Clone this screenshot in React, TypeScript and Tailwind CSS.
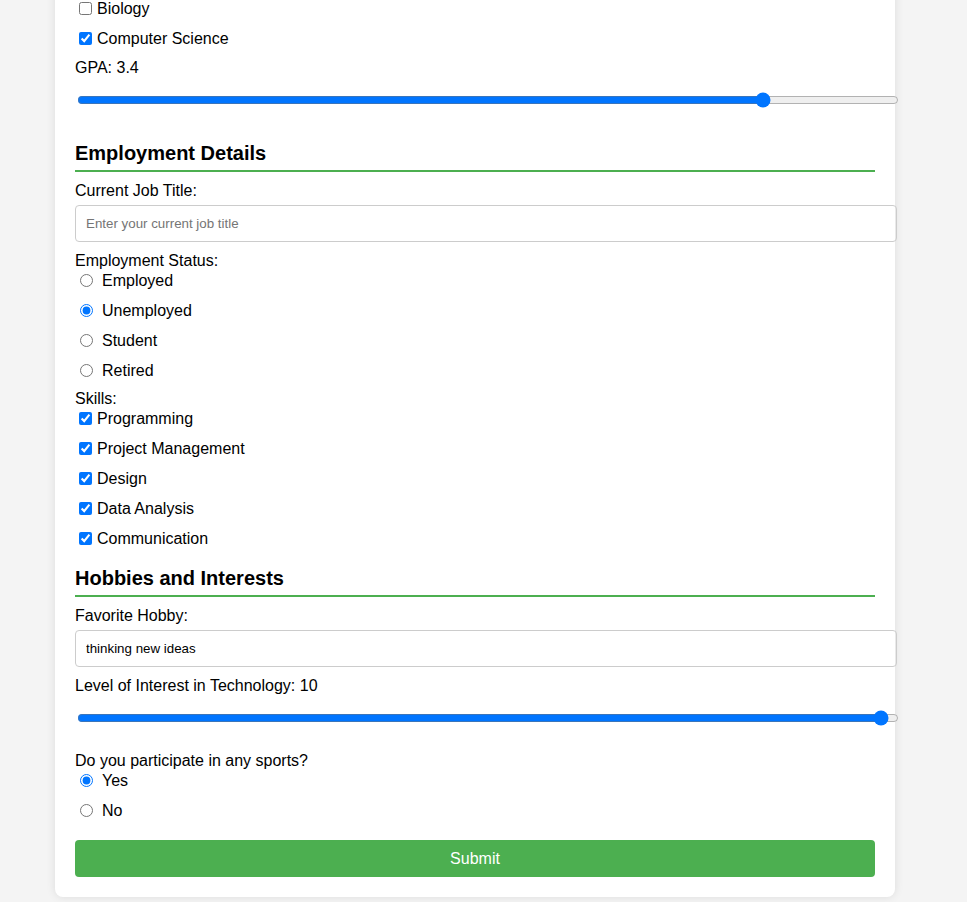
import React from "react";

const Check = ({ label, checked }: { label: string; checked: boolean }) => (
  <label className="flex items-start h-[18px] leading-[20px]">
    <input
      type="checkbox"
      defaultChecked={checked}
      className="self-center ml-[4px] mr-[5px] w-[13px] h-[13px]"
    />
    {label}
  </label>
);

const Radio = ({
  name,
  label,
  checked,
}: {
  name: string;
  label: string;
  checked?: boolean;
}) => (
  <label className="flex items-start h-[18px] leading-[20px]">
    <input
      type="radio"
      name={name}
      defaultChecked={checked}
      className="self-center ml-[5px] mr-[9px] w-[13px] h-[13px]"
    />
    {label}
  </label>
);

const SectionTitle = ({ children, className }: { children: string; className: string }) => (
  <h2
    className={`${className} text-[20px] font-bold leading-[23px] pt-[1px] pb-[5px] border-b-2 border-[#4CAF50]`}
  >
    {children}
  </h2>
);

const App = () => {
  const skills = ["Programming", "Project Management", "Design", "Data Analysis", "Communication"];
  const statuses = ["Employed", "Unemployed", "Student", "Retired"];

  return (
    <div className="h-[902px] overflow-hidden bg-[#f4f4f4] font-['Liberation_Sans',Arial,sans-serif] text-[16px] leading-[20px] text-black">
      <div className="ml-[55px] -mt-[21px] w-[840px] bg-white rounded-lg shadow-[0_0_10px_rgba(0,0,0,0.1)] px-5 pt-5 pb-5">
        {/* Education tail */}
        <Check label="Biology" checked={false} />
        <div className="mt-[12px]">
          <Check label="Computer Science" checked={true} />
        </div>
        <div className="mt-[11px] h-[18px]">GPA: 3.4</div>
        <input
          type="range"
          min={0}
          max={4}
          step={0.1}
          defaultValue={3.4}
          className="block mt-[6px] ml-[2px] w-[822px] h-[36px] px-[10px]"
        />

        {/* Employment */}
        <SectionTitle className="mt-[23px]">Employment Details</SectionTitle>
        <div className="mt-[9px] h-[18px]">Current Job Title:</div>
        <input
          type="text"
          placeholder="Enter your current job title"
          className="block mt-[6px] w-[822px] h-[37px] px-[10px] border border-[#ccc] rounded-[4px] text-[13.333px] leading-normal placeholder:text-[#757575]"
        />
        <div className="mt-[9px] h-[18px]">Employment Status:</div>
        <div className="mt-[2px] flex flex-col gap-[12px]">
          {statuses.map((s) => (
            <Radio key={s} name="status" label={s} checked={s === "Unemployed"} />
          ))}
        </div>
        <div className="mt-[10px] h-[18px]">Skills:</div>
        <div className="mt-[2px] flex flex-col gap-[12px]">
          {skills.map((s) => (
            <Check key={s} label={s} checked={true} />
          ))}
        </div>

        {/* Hobbies */}
        <SectionTitle className="mt-[19px]">Hobbies and Interests</SectionTitle>
        <div className="mt-[9px] h-[18px]">Favorite Hobby:</div>
        <input
          type="text"
          defaultValue="thinking new ideas"
          className="block mt-[6px] w-[822px] h-[37px] px-[10px] border border-[#ccc] rounded-[4px] text-[13.333px] leading-normal"
        />
        <div className="mt-[9px] h-[18px]">Level of Interest in Technology: 10</div>
        <input
          type="range"
          min={1}
          max={10}
          defaultValue={10}
          className="block mt-[6px] ml-[2px] w-[822px] h-[36px] px-[10px]"
        />
        <div className="mt-[15px] h-[18px]">Do you participate in any sports?</div>
        <div className="mt-[2px] flex flex-col gap-[12px]">
          <Radio name="sports" label="Yes" checked />
          <Radio name="sports" label="No" />
        </div>

        <button
          type="submit"
          className="block mt-[21px] w-[800px] h-[37px] bg-[#4CAF50] text-white rounded-[4px] text-[16px]"
        >
          Submit
        </button>
      </div>
    </div>
  );
};

export default App;
